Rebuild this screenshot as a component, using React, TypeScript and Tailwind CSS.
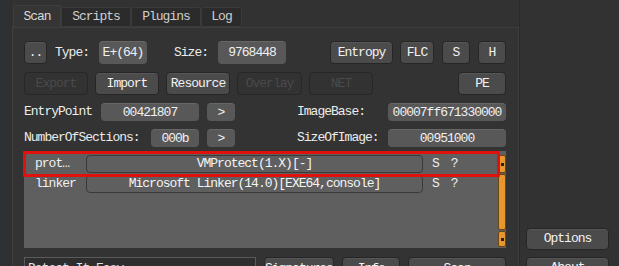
import React from 'react'

const font = "font-['Liberation_Mono','DejaVu_Sans_Mono',monospace] text-[13px] tracking-[-1px]"

const btn =
  'h-[23px] flex items-center justify-center rounded-[4px] border border-[#262626] bg-[#4b4b4b] text-[#f2f2f2] shadow-[inset_0_1px_0_#565656]'
const btnOff =
  'h-[23px] flex items-center justify-center rounded-[4px] border border-[#272727] bg-[#323232] text-[#4a4a4a]'
const field =
  'h-[18px] flex items-center justify-center rounded-[4px] bg-[#585858] text-[#f0f0f0] border-t border-[#666]'

const tabs = [
  { name: 'Scan', w: 'w-[48px]', active: true },
  { name: 'Scripts', w: 'w-[70px]', active: false },
  { name: 'Plugins', w: 'w-[70px]', active: false },
  { name: 'Log', w: 'w-[41px]', active: false },
]

const detects = [
  { type: 'prot…', name: 'VMProtect(1.X)[-]' },
  { type: 'linker', name: 'Microsoft Linker(14.0)[EXE64,console]' },
]

function Dot() {
  return <div className="w-[3px] h-[3px] bg-[#222]" />
}

export default function App() {
  return (
    <div className={`w-[619px] h-[266px] overflow-hidden bg-[#323232] flex ${font}`}>
      {/* left window edge */}
      <div className="w-[4px] bg-[#2c3136]" />
      <div className="w-[8px] bg-[#303030]" />

      {/* main tab widget */}
      <div className="w-[507px] flex flex-col pt-[5px]">
        <div className="flex items-end h-[22px] pl-[1px]">
          {tabs.map((t) =>
            t.active ? (
              <div
                key={t.name}
                className={`${t.w} h-[23px] -mb-[1px] flex items-center justify-center border border-b-0 border-[#3f3f3f] bg-[#353535] text-[#d8d8d8] rounded-t-[2px]`}
              >
                {t.name}
              </div>
            ) : (
              <div
                key={t.name}
                className={`${t.w} h-[20px] flex items-center justify-center border border-[#3a3a3a] bg-[#2b2b2b] text-[#cfcfcf] rounded-t-[2px]`}
              >
                {t.name}
              </div>
            )
          )}
        </div>

        <div className="flex-1 border border-[#3e3e3e] bg-[#333333] pt-[13px] pl-[11px] pr-[12px] flex flex-col">
          {/* row 1 */}
          <div className="flex items-center h-[23px]">
            <div className={`${btn} w-[23px] text-[#bbb]`}>..</div>
            <span className="ml-[8px] text-[#ececec]">Type:</span>
            <div className={`${field} h-[23px] ml-[10px] w-[48px]`}>E+(64)</div>
            <span className="ml-[27px] text-[#ececec]">Size:</span>
            <div className={`${field} h-[23px] ml-[10px] w-[68px]`}>9768448</div>
            <div className="flex-1" />
            <div className={`${btn} w-[63px]`}>Entropy</div>
            <div className={`${btn} w-[34px] ml-[7px]`}>FLC</div>
            <div className={`${btn} w-[28px] ml-[8px]`}>S</div>
            <div className={`${btn} w-[28px] ml-[8px]`}>H</div>
          </div>

          {/* row 2 */}
          <div className="flex items-center h-[23px] mt-[8px]">
            <div className={`${btnOff} w-[64px]`}>Export</div>
            <div className={`${btn} w-[64px] ml-[7px]`}>Import</div>
            <div className={`${btn} w-[64px] ml-[7px]`}>Resource</div>
            <div className={`${btnOff} w-[65px] ml-[7px]`}>Overlay</div>
            <div className={`${btnOff} w-[64px] ml-[7px]`}>NET</div>
            <div className="flex-1" />
            <div className={`${btn} w-[48px]`}>PE</div>
          </div>

          {/* row 3 */}
          <div className="flex items-center h-[18px] mt-[8px]">
            <span className="w-[77px] text-[#ececec]">EntryPoint</span>
            <div className={`${field} w-[98px]`}>00421807</div>
            <div className={`${field} w-[28px] ml-[8px] bg-[#4e4e4e]`}>&gt;</div>
            <span className="ml-[62px] text-[#ececec]">ImageBase:</span>
            <div className="flex-1" />
            <div className={`${field} w-[118px]`}>00007ff671330000</div>
          </div>

          {/* row 4 */}
          <div className="flex items-center h-[18px] mt-[8px]">
            <span className="w-[127px] text-[#ececec]">NumberOfSections:</span>
            <div className={`${field} w-[48px]`}>000b</div>
            <div className={`${field} w-[28px] ml-[8px] bg-[#4e4e4e]`}>&gt;</div>
            <span className="ml-[62px] text-[#ececec]">SizeOfImage:</span>
            <div className="flex-1" />
            <div className={`${field} w-[118px]`}>00951000</div>
          </div>

          {/* detections list */}
          <div className="relative mt-[4px] h-[97px] bg-[#5f5f5f] flex">
            <div className="flex-1 flex flex-col pt-[3px]">
              {detects.map((d) => (
                <div key={d.type} className="flex items-center h-[20px]">
                  <span className="w-[62px] pl-[11px] text-[#f0f0f0]">{d.type}</span>
                  <div className="w-[337px] h-[18px] flex items-center justify-center rounded-[4px] border border-[#3a3a3a] text-[#f4f4f4]">
                    {d.name}
                  </div>
                  <span className="ml-[9px] text-[#f0f0f0]">S</span>
                  <span className="ml-[12px] text-[#f0f0f0]">?</span>
                </div>
              ))}
            </div>
            {/* scrollbar */}
            <div className="w-[8px] mt-[4px] mb-[1px] flex flex-col gap-[1px]">
              <div className="h-[18px] rounded-[2px] bg-[#e8962e] border border-[#6a4412] flex items-center justify-center">
                <Dot />
              </div>
              <div className="flex-1 rounded-[2px] bg-[#e8962e] border border-[#6a4412]" />
              <div className="h-[16px] rounded-[2px] bg-[#e8962e] border border-[#6a4412] flex items-center justify-center">
                <Dot />
              </div>
            </div>
            {/* highlight around first detection */}
            <div className="absolute left-[-1px] top-[0px] w-[477px] h-[26px] border-[3px] border-[#e0100c] rounded-[1px]" />
          </div>

          {/* bottom row */}
          <div className="flex items-start mt-[9px] h-[24px]">
            <div className="w-[232px] h-[24px] flex items-center pl-[3px] border border-[#5a5a5a] bg-[#2e2e2e] text-[#e0e0e0]">
              Detect It Easy
            </div>
            <div className={`${btn} w-[71px] ml-[8px]`}>Signatures</div>
            <div className={`${btn} w-[58px] ml-[8px]`}>Info</div>
            <div className={`${btn} w-[98px] ml-[8px]`}>Scan</div>
          </div>
        </div>
      </div>

      {/* right column */}
      <div className="flex-1 flex flex-col border-l border-[#2a2a2a] pl-[6px] pr-[10px] pt-[228px]">
        <div className={`${btn} h-[24px] w-[83px]`}>Options</div>
        <div className={`${btn} h-[24px] w-[83px] mt-[7px]`}>About</div>
      </div>
    </div>
  )
}
